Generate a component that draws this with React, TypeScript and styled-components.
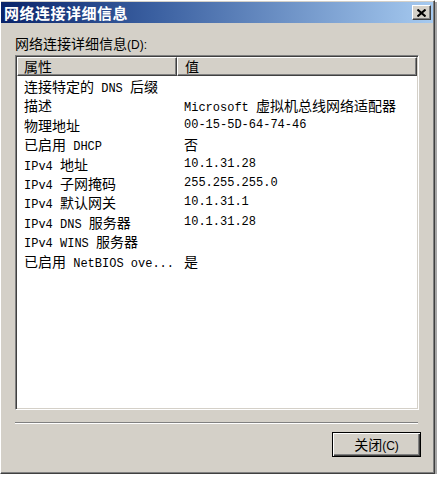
import React from 'react';
import styled, { createGlobalStyle } from 'styled-components';

const GlobalStyle = createGlobalStyle`
  html, body {
    margin: 0;
    padding: 0;
    background: #ffffff;
  }
`;

const FACE = '#D4D0C8';
const CJK = '"Noto Sans CJK SC", "Noto Sans CJK TC", sans-serif';
const MONO = '"Liberation Mono", "Noto Sans CJK SC", monospace';

// Window frame
const Window = styled.div`
  width: 435px;
  height: 474px;
  box-sizing: border-box;
  display: flex;
  flex-direction: column;
  background: ${FACE};
  border: 1px solid;
  border-color: #ffffff #404040 #404040 #ffffff;
  box-shadow: inset -1px -1px 0 #808080, 2px 2px 0 rgba(0, 0, 0, 0.35);
  font-family: ${MONO};
  font-size: 12px;
  color: #000;
`;

const TitleBar = styled.div`
  height: 21px;
  margin: 1px 1px 0 0;
  padding: 0 2px 0 3px;
  display: flex;
  align-items: center;
  justify-content: space-between;
  background: linear-gradient(to right, #0a246a 0%, #3a5fa0 35%, #a6caf0 100%);
`;

const TitleText = styled.span`
  font-family: ${CJK};
  font-size: 15px;
  font-weight: 700;
  letter-spacing: 0.5px;
  color: #ffffff;
`;

const CloseButton = styled.div`
  width: 19px;
  height: 15px;
  box-sizing: border-box;
  display: flex;
  align-items: center;
  justify-content: center;
  background: ${FACE};
  border: 1px solid;
  border-color: #ffffff #404040 #404040 #ffffff;
  box-shadow: inset -1px -1px 0 #808080;
`;

const Body = styled.div`
  flex: 1;
  display: flex;
  flex-direction: column;
  padding: 12px 13px 0 14px;
`;

const Label = styled.div`
  height: 16px;
  line-height: 16px;
  white-space: pre;
`;

const Han = styled.span`
  font-family: ${CJK};
  font-size: 14px;
`;

const Small = styled.span`
  font-family: "Liberation Sans", sans-serif;
  font-size: 12px;
`;

const ListBox = styled.div`
  width: 404px;
  height: 355px;
  margin-top: 4px;
  box-sizing: border-box;
  background: #ffffff;
  border: 1px solid;
  border-color: #808080 #ffffff #ffffff #808080;
  box-shadow: inset 1px 1px 0 #404040, inset -1px -1px 0 ${FACE};
  padding: 1px;
`;

const Grid = styled.div`
  display: grid;
  grid-template-columns: 160px 240px;
  grid-template-rows: 19px;
  grid-auto-rows: 19.4px;
`;

const HeaderCell = styled.div<{ $pad: number }>`
  height: 19px;
  box-sizing: border-box;
  line-height: 17px;
  padding-left: ${(p) => p.$pad}px;
  background: ${FACE};
  border: 1px solid;
  border-color: #ffffff #404040 #404040 #ffffff;
  box-shadow: inset -1px -1px 0 #808080;
`;

const Cell = styled.div<{ $pad: number }>`
  line-height: 20px;
  white-space: pre;
  padding-left: ${(p) => p.$pad}px;
  color: #000;
`;

const Separator = styled.div`
  width: 403px;
  margin-top: 12px;
  border-top: 1px solid #808080;
  border-bottom: 1px solid #ffffff;
`;

const Footer = styled.div`
  display: flex;
  justify-content: flex-end;
  margin-top: 8px;
`;

const Button = styled.div`
  width: 89px;
  height: 25px;
  box-sizing: border-box;
  line-height: 22px;
  text-align: center;
  background: ${FACE};
  border: 1px solid #000000;
  box-shadow: inset 1px 1px 0 #ffffff, inset -1px -1px 0 #404040, inset -2px -2px 0 #808080;
`;

const HAN_RUN = /([\u3000-\u9fff\uff00-\uffef]+)/;

// wrap Chinese runs so they get the larger CJK size
const Mixed: React.FC<{ text: string }> = ({ text }) => (
  <>
    {text.split(HAN_RUN).map((part, i) =>
      i % 2 === 1 ? <Han key={i}>{part}</Han> : part
    )}
  </>
);

const rows: [string, string][] = [
  ['连接特定的 DNS 后缀', ''],
  ['描述', 'Microsoft 虚拟机总线网络适配器'],
  ['物理地址', '00-15-5D-64-74-46'],
  ['已启用 DHCP', '否'],
  ['IPv4 地址', '10.1.31.28'],
  ['IPv4 子网掩码', '255.255.255.0'],
  ['IPv4 默认网关', '10.1.31.1'],
  ['IPv4 DNS 服务器', '10.1.31.28'],
  ['IPv4 WINS 服务器', ''],
  ['已启用 NetBIOS ove...', '是'],
];

const App: React.FC = () => {
  return (
    <>
      <GlobalStyle />
      <Window>
        <TitleBar>
          <TitleText>网络连接详细信息</TitleText>
          <CloseButton>
            <svg width="9" height="8" viewBox="0 0 9 8">
              <path d="M0.5 0.5 L8.5 7.5 M8.5 0.5 L0.5 7.5" stroke="#000" strokeWidth="2" />
            </svg>
          </CloseButton>
        </TitleBar>
        <Body>
          <Label>
            <Han>网络连接详细信息</Han>
            <Small>(D):</Small>
          </Label>
          <ListBox>
            <Grid>
              <HeaderCell $pad={6}>
                <Han>属性</Han>
              </HeaderCell>
              <HeaderCell $pad={7}>
                <Han>值</Han>
              </HeaderCell>
              {rows.map(([k, v], i) => (
                <React.Fragment key={i}>
                  <Cell $pad={7}>
                    <Mixed text={k} />
                  </Cell>
                  <Cell $pad={7}>
                    <Mixed text={v} />
                  </Cell>
                </React.Fragment>
              ))}
            </Grid>
          </ListBox>
          <Separator />
          <Footer>
            <Button>
              <Han>关闭</Han>
              <Small>(C)</Small>
            </Button>
          </Footer>
        </Body>
      </Window>
    </>
  );
};

export default App;
